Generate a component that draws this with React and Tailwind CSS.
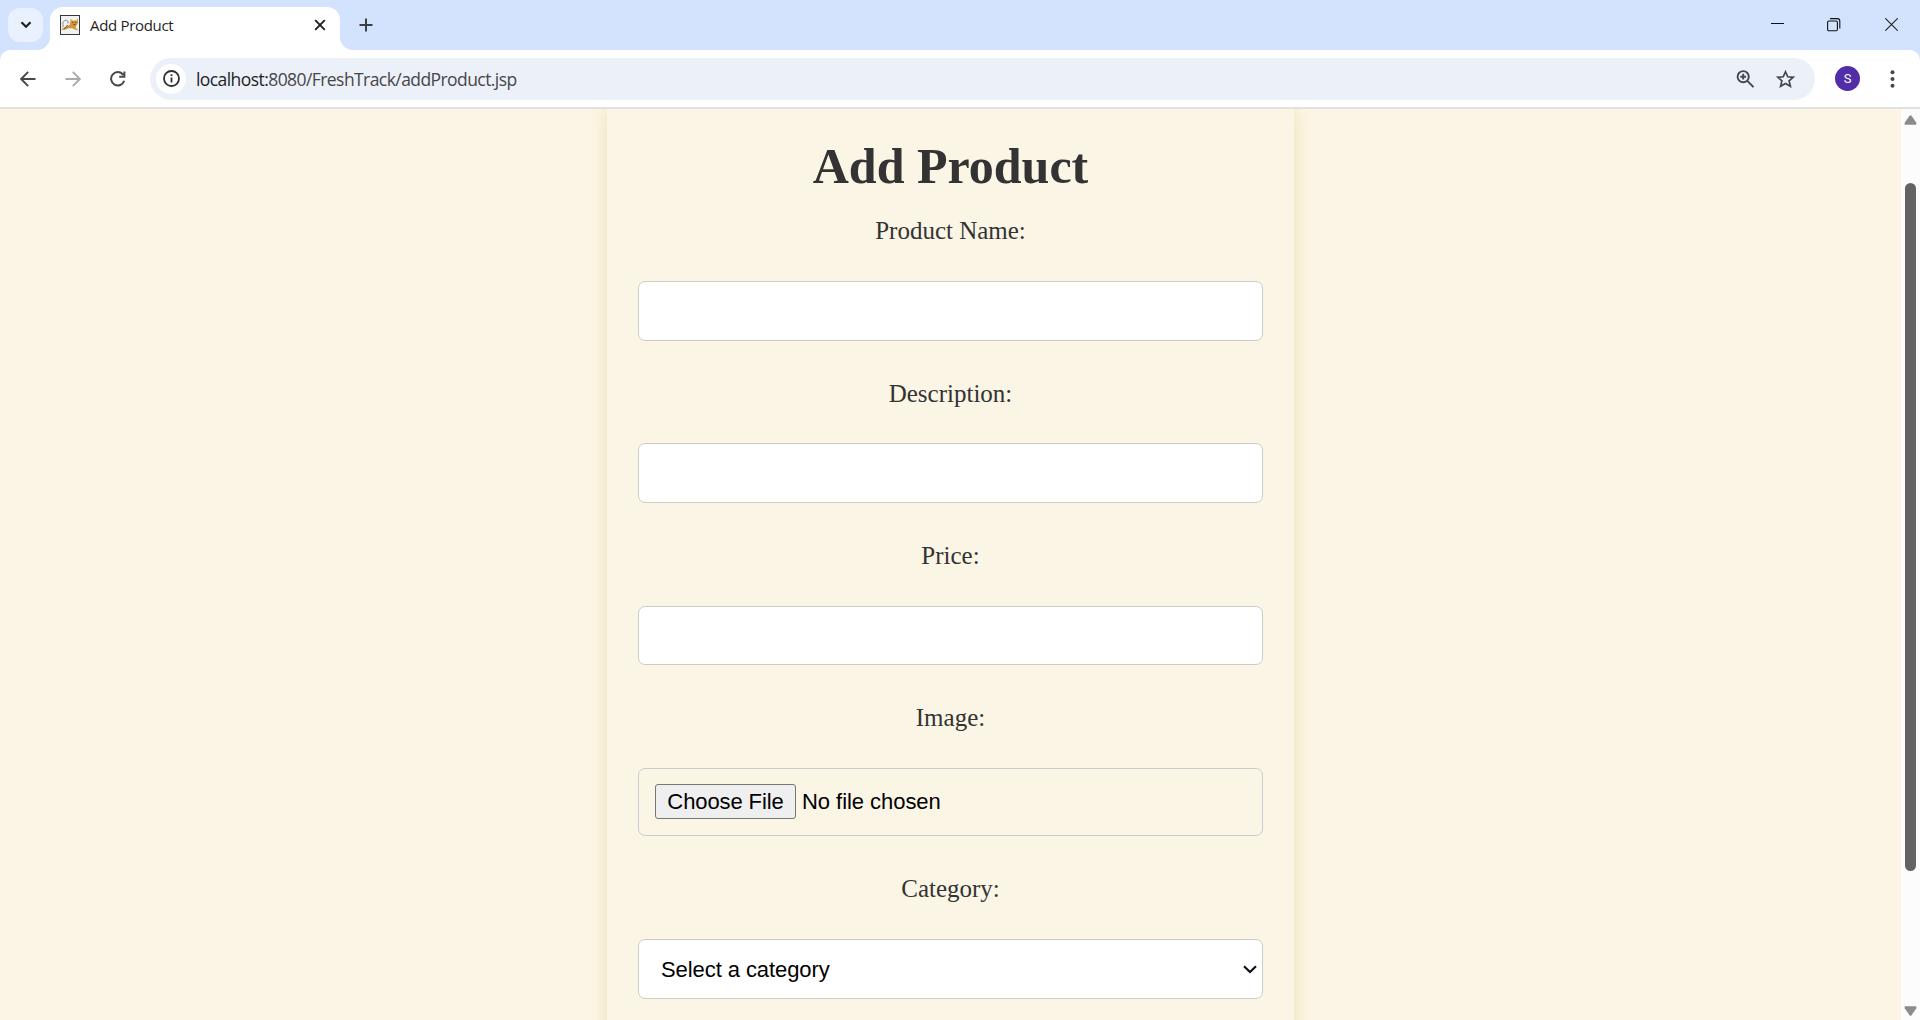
function Favicon() {
  return (
    <svg className="h-5 w-5 shrink-0" viewBox="0 0 20 20">
      <rect x="0.5" y="0.5" width="19" height="19" fill="#f1f2f3" stroke="#34373a" />
      <path d="M6.5 5 Q2 6 3 9.5 Q3.6 11 2.5 12.5 M6.5 5.5 Q9 6 8 8.5" fill="none" stroke="#85898e" strokeWidth="1" />
      <path d="M1 14.5 L6 11.5 L10 9.8 L10.5 4 L13 5.5 H16 L18 3.5 V8 L16.5 10.5 L15.5 12.5 L18.5 15.5 L16 15 L12.5 13.3 L8.5 13.2 L4 15 Z" fill="#d0963a" />
      <path d="M4.5 13.5 L6.5 12 M7.5 10 L6.5 11.5" stroke="#5b4522" strokeWidth="1" fill="none" />
      <path d="M12 7.2 h1.3 M15 7.2 h1.3 M13.6 9.6 h1.6" stroke="#5a441d" strokeWidth="1" />
      <path d="M11.5 5 L13 6.5 M17.3 5 L16 6.5" stroke="#f2d7a0" strokeWidth="0.8" />
    </svg>
  );
}

function TabStrip() {
  return (
    <div className="flex h-[50px] items-start bg-[#d3e2fd]">
      <button className="ml-2 mt-2 flex h-[34px] w-[35px] items-center justify-center rounded-xl bg-[#e9f0fe]">
        <svg width="12" height="8" viewBox="0 0 12 8" fill="none" stroke="#1f1f1f" strokeWidth="2.2">
          <path d="M1.5 1.3 L6 5.8 L10.5 1.3" />
        </svg>
      </button>
      <div className="relative ml-[7px] mt-[7px] flex h-[43px] w-[290px] items-center rounded-t-[13px] bg-white pb-[7px] pl-[10px] pr-[14px]">
        <svg className="absolute bottom-0 -left-[13px]" width="13" height="13" viewBox="0 0 13 13">
          <path d="M13 0 V13 H0 A13 13 0 0 0 13 0Z" fill="#fff" />
        </svg>
        <svg className="absolute bottom-0 -right-[13px]" width="13" height="13" viewBox="0 0 13 13">
          <path d="M0 0 V13 H13 A13 13 0 0 1 0 0Z" fill="#fff" />
        </svg>
        <Favicon />
        <span className="ml-[10px] grow text-[15px] leading-5 tracking-[-0.32px] text-[#1f1f1f]">Add Product</span>
        <svg width="12" height="12" viewBox="0 0 12 12" stroke="#1f1f1f" strokeWidth="1.9">
          <path d="M1.2 1.2 L10.8 10.8 M10.8 1.2 L1.2 10.8" />
        </svg>
      </div>
      <svg className="ml-[19px] mt-[18px]" width="14" height="14" viewBox="0 0 14 14" stroke="#3c3f43" strokeWidth="2">
        <path d="M7 0.5 V13.5 M0.5 7 H13.5" />
      </svg>
      <div className="ml-auto flex h-[50px] items-center">
        <svg className="mb-px" width="13" height="13" viewBox="0 0 13 13" stroke="#111" strokeWidth="1">
          <path d="M0 5.5 H13" />
        </svg>
        <svg className="ml-[43px]" width="14" height="14" viewBox="0 0 14 14" fill="none" stroke="#111" strokeWidth="1.1">
          <rect x="0.6" y="3" width="9.8" height="9.8" rx="1.2" />
          <path d="M3 0.6 H10.4 Q12.8 0.6 12.8 3 V10.6" />
        </svg>
        <svg className="ml-11 mr-[22px] mb-px" width="13" height="13" viewBox="0 0 13 13" stroke="#222" strokeWidth="1.1">
          <path d="M0.3 0.3 L12.7 12.7 M12.7 0.3 L0.3 12.7" />
        </svg>
      </div>
    </div>
  );
}

function Toolbar() {
  return (
    <div className="bg-[#d3e2fd]">
      <div className="flex h-[59px] items-center rounded-t-[10px] border-b-2 border-[#dee2e1] bg-white">
        <svg className="ml-5" width="16" height="16" viewBox="0 0 16 16" fill="none" stroke="#45484b" strokeWidth="1.9">
          <path d="M8.2 0.8 L1.2 8 L8.2 15.2 M1.5 8 H15.5" />
        </svg>
        <svg className="ml-[29px]" width="16" height="16" viewBox="0 0 16 16" fill="none" stroke="#aaacae" strokeWidth="1.9">
          <path d="M7.8 0.8 L14.8 8 L7.8 15.2 M14.5 8 H0.5" />
        </svg>
        <svg className="ml-[29px]" width="16" height="16" viewBox="0 0 16 16" fill="none" stroke="#45484b" strokeWidth="2">
          <path d="M13.2 3.8 A6.7 6.7 0 1 0 14.2 9.8 M14.4 0.5 V5.8 H9.2" />
        </svg>
        <div className="ml-6 flex h-[42px] w-[1665px] items-center rounded-full bg-[#ebf0f9] pl-1.5">
          <div className="flex h-[30px] w-[30px] items-center justify-center rounded-full bg-white">
            <svg width="17" height="17" viewBox="0 0 17 17" fill="none" stroke="#2f3032" strokeWidth="1.8">
              <circle cx="8.5" cy="8.5" r="7.5" />
              <path d="M8.5 7.5 V12.5 M8.5 4.3 V6.1" />
            </svg>
          </div>
          <span className="ml-[10px] grow whitespace-nowrap text-[17.5px] leading-6 tracking-[-0.57px] text-[#474747]">
            <span className="text-[#1f1f1f]">localhost:</span>8080/FreshTrack/addProduct.jsp
          </span>
          <svg width="18" height="18" viewBox="0 0 18 18" fill="none" stroke="#45484b" strokeWidth="1.9">
            <circle cx="7.2" cy="6.7" r="5.6" />
            <path d="M11.3 10.8 L17.5 17.2 M7.2 3.8 V9.6 M4.3 6.7 H10.1" />
          </svg>
          <svg className="ml-[22px] mr-5" width="19" height="18" viewBox="0 0 19 18" fill="none" stroke="#45484b" strokeWidth="1.7">
            <path d="M9.5 1.8 L11.8 6.8 L17.2 7.3 L13.1 10.9 L14.4 16.3 L9.5 13.4 L4.6 16.3 L5.9 10.9 L1.8 7.3 L7.2 6.8 Z" />
          </svg>
        </div>
        <div className="ml-5 flex h-[25px] w-[25px] items-center justify-center rounded-full bg-[#512da8] font-[Roboto] text-[13px] leading-none text-white">
          S
        </div>
        <svg className="ml-[30px]" width="5" height="18" viewBox="0 0 5 18" fill="#45484b">
          <circle cx="2.5" cy="2.2" r="2" />
          <circle cx="2.5" cy="9" r="2" />
          <circle cx="2.5" cy="15.8" r="2" />
        </svg>
      </div>
    </div>
  );
}

const fieldBox = "w-[625px] rounded-[7px] border border-[#ccc]";

function Field({ label, children }) {
  return (
    <div className="flex flex-col items-center">
      <div className="h-[30px] text-[25px] leading-[30px] text-[#333]">{label}</div>
      <div className="mt-[34.86px] mb-[38.05px]">{children}</div>
    </div>
  );
}

function TextBox() {
  return <div className={`${fieldBox} h-[59.5px] bg-white`} />;
}

function ProductForm() {
  return (
    <div className="flex h-[1000px] w-[687px] shrink-0 flex-col items-center bg-[#fbf5e5] pt-7 font-['Liberation_Serif',serif] shadow-[0_0_17px_#ebe2b0]">
      <h1 className="text-[50px] font-bold leading-[58px] text-[#333]">Add Product</h1>
      <div className="mt-[21.2px]">
        <Field label="Product Name:"><TextBox /></Field>
        <Field label="Description:"><TextBox /></Field>
        <Field label="Price:"><TextBox /></Field>
        <Field label="Image:">
          <div className={`${fieldBox} flex h-[68px] items-center pb-0.5 pl-4 font-['Liberation_Sans',sans-serif] text-[22px] leading-[25px] text-black`}>
            <div className="flex h-[35px] w-[141px] items-center justify-center rounded-[3px] border border-[#767676] bg-[#efefef] tracking-[-0.1px]">Choose File</div>
            <span className="ml-[6px] tracking-[-0.05px]">No file chosen</span>
          </div>
        </Field>
        <Field label="Category:">
          <div className={`${fieldBox} flex h-[59.5px] items-center bg-white pt-px pl-[22px] pr-[5px] font-['Liberation_Sans',sans-serif] text-[22px] leading-[25px] text-black`}>
            <span className="grow tracking-[-0.08px]">Select a category</span>
            <svg width="14" height="9" viewBox="0 0 14 9" fill="none" stroke="#101010" strokeWidth="2.2">
              <path d="M1 1.2 L7 7 L13 1.2" />
            </svg>
          </div>
        </Field>
      </div>
    </div>
  );
}

function Scrollbar() {
  return (
    <div className="flex h-full w-[19px] flex-col items-center bg-[#fcfcfc]">
      <svg className="mt-[6px]" width="13" height="10" viewBox="0 0 13 10" fill="#8b8b8b">
        <path d="M5.5 0.8 Q6.5 -0.2 7.5 0.8 L12.3 7.8 Q12.8 9.6 11.5 9.7 H1.5 Q0.2 9.6 0.7 7.8 Z" />
      </svg>
      <div className="mt-[58px] h-[688px] w-[11px] rounded-full bg-[#636363]" />
      <svg className="mt-auto mb-1" width="13" height="10" viewBox="0 0 13 10" fill="#8b8b8b">
        <path d="M5.5 9.2 Q6.5 10.2 7.5 9.2 L12.3 2.2 Q12.8 0.4 11.5 0.3 H1.5 Q0.2 0.4 0.7 2.2 Z" />
      </svg>
    </div>
  );
}

export default function App() {
  return (
    <div className="flex h-[1020px] w-[1920px] flex-col overflow-hidden font-['Open_Sans','Noto_Sans',sans-serif]">
      <TabStrip />
      <Toolbar />
      <div className="flex min-h-0 grow">
        <main className="flex grow items-start justify-center overflow-hidden bg-[#fcf5e5]">
          <ProductForm />
        </main>
        <Scrollbar />
      </div>
    </div>
  );
}
